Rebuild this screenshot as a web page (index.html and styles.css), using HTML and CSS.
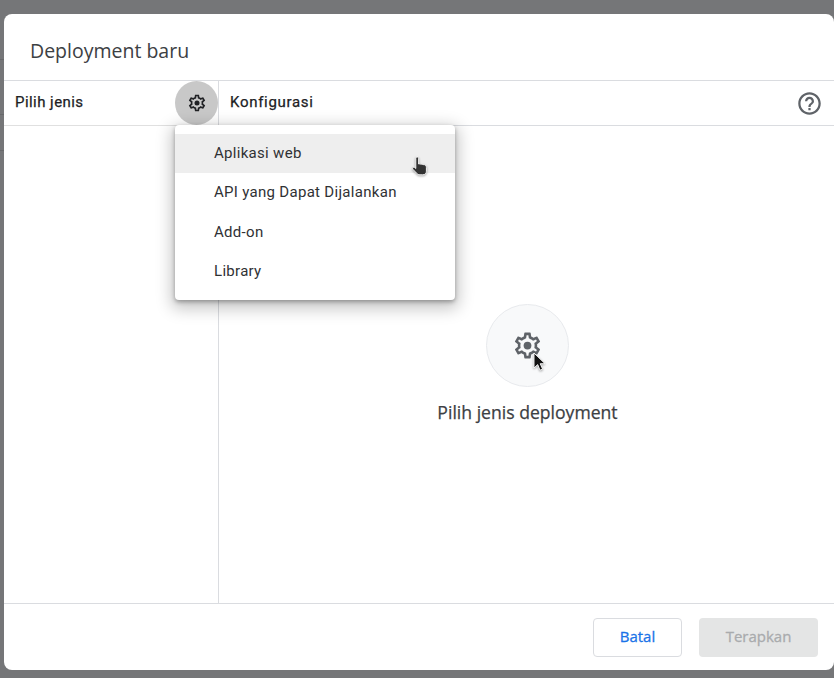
FILE: index.html
```html
<!DOCTYPE html>
<html lang="id">
<head>
<meta charset="utf-8">
<title>Deployment baru</title>
<link rel="stylesheet" href="styles.css">
</head>
<body>
<div class="backdrop">
  <div class="dialog">
    <header class="title-bar"><h1 class="title">Deployment baru</h1></header>
    <div class="columns">
      <aside class="side">
        <div class="side-head">
          <span class="head-label">Pilih jenis</span>
          <span class="gear-btn">
            <svg class="gear-sm" viewBox="0 0 24 24"><path d="M19.43 12.98c.04-.32.07-.64.07-.98 0-.34-.03-.66-.07-.98l2.11-1.65c.19-.15.24-.42.12-.64l-2-3.46c-.09-.16-.26-.25-.44-.25-.06 0-.12.01-.17.03l-2.49 1c-.52-.4-1.08-.73-1.69-.98l-.38-2.65C14.46 2.18 14.25 2 14 2h-4c-.25 0-.46.18-.49.42l-.38 2.65c-.61.25-1.17.59-1.69.98l-2.49-1c-.06-.02-.12-.03-.18-.03-.17 0-.34.09-.43.25l-2 3.46c-.13.22-.07.49.12.64l2.11 1.65c-.04.32-.07.65-.07.98 0 .33.03.66.07.98l-2.11 1.65c-.19.15-.24.42-.12.64l2 3.46c.09.16.26.25.44.25.06 0 .12-.01.17-.03l2.49-1c.52.4 1.08.73 1.69.98l.38 2.65c.03.24.24.42.49.42h4c.25 0 .46-.18.49-.42l.38-2.65c.61-.25 1.17-.59 1.69-.98l2.49 1c.06.02.12.03.18.03.17 0 .34-.09.43-.25l2-3.46c.12-.22.07-.49-.12-.64l-2.11-1.65zm-1.98-1.71c.04.31.05.52.05.73 0 .21-.02.43-.05.73l-.14 1.13.89.7 1.08.84-.7 1.21-1.27-.51-1.04-.42-.9.68c-.43.32-.84.56-1.25.73l-1.06.43-.16 1.13-.2 1.35h-1.4l-.19-1.35-.16-1.13-1.06-.43c-.43-.18-.83-.41-1.23-.71l-.91-.7-1.06.43-1.27.51-.7-1.21 1.08-.84.89-.7-.14-1.13c-.03-.31-.05-.54-.05-.74s.02-.43.05-.73l.14-1.13-.89-.7-1.08-.84.7-1.21 1.27.51 1.04.42.9-.68c.43-.32.84-.56 1.25-.73l1.06-.43.16-1.13.2-1.35h1.39l.19 1.35.16 1.13 1.06.43c.43.18.83.41 1.23.71l.91.7 1.06-.43 1.27-.51.7 1.21-1.07.85-.89.7.14 1.13z"/><circle cx="12" cy="12" r="3"/></svg>
          </span>
        </div>
      </aside>
      <main class="content">
        <div class="content-head">
          <span class="head-label">Konfigurasi</span>
          <svg class="help" viewBox="0 0 24 24"><path d="M11 18h2v-2h-2v2zm1-16C6.48 2 2 6.48 2 12s4.48 10 10 10 10-4.48 10-10S17.52 2 12 2zm0 18c-4.41 0-8-3.59-8-8s3.59-8 8-8 8 3.59 8 8-3.59 8-8 8zm0-14c-2.21 0-4 1.79-4 4h2c0-1.1.9-2 2-2s2 .9 2 2c0 2-3 1.75-3 5h2c0-2.25 3-2.5 3-5 0-2.21-1.79-4-4-4z"/></svg>
        </div>
        <div class="empty">
          <div class="empty-circle">
            <svg class="gear-lg" viewBox="0 0 24 24"><path d="M19.43 12.98c.04-.32.07-.64.07-.98 0-.34-.03-.66-.07-.98l2.11-1.65c.19-.15.24-.42.12-.64l-2-3.46c-.09-.16-.26-.25-.44-.25-.06 0-.12.01-.17.03l-2.49 1c-.52-.4-1.08-.73-1.69-.98l-.38-2.65C14.46 2.18 14.25 2 14 2h-4c-.25 0-.46.18-.49.42l-.38 2.65c-.61.25-1.17.59-1.69.98l-2.49-1c-.06-.02-.12-.03-.18-.03-.17 0-.34.09-.43.25l-2 3.46c-.13.22-.07.49.12.64l2.11 1.65c-.04.32-.07.65-.07.98 0 .33.03.66.07.98l-2.11 1.65c-.19.15-.24.42-.12.64l2 3.46c.09.16.26.25.44.25.06 0 .12-.01.17-.03l2.49-1c.52.4 1.08.73 1.69.98l.38 2.65c.03.24.24.42.49.42h4c.25 0 .46-.18.49-.42l.38-2.65c.61-.25 1.17-.59 1.69-.98l2.49 1c.06.02.12.03.18.03.17 0 .34-.09.43-.25l2-3.46c.12-.22.07-.49-.12-.64l-2.11-1.65zm-1.98-1.71c.04.31.05.52.05.73 0 .21-.02.43-.05.73l-.14 1.13.89.7 1.08.84-.7 1.21-1.27-.51-1.04-.42-.9.68c-.43.32-.84.56-1.25.73l-1.06.43-.16 1.13-.2 1.35h-1.4l-.19-1.35-.16-1.13-1.06-.43c-.43-.18-.83-.41-1.23-.71l-.91-.7-1.06.43-1.27.51-.7-1.21 1.08-.84.89-.7-.14-1.13c-.03-.31-.05-.54-.05-.74s.02-.43.05-.73l.14-1.13-.89-.7-1.08-.84.7-1.21 1.27.51 1.04.42.9-.68c.43-.32.84-.56 1.25-.73l1.06-.43.16-1.13.2-1.35h1.39l.19 1.35.16 1.13 1.06.43c.43.18.83.41 1.23.71l.91.7 1.06-.43 1.27-.51.7 1.21-1.07.85-.89.7.14 1.13z"/><circle cx="12" cy="12" r="3"/></svg>
          </div>
          <p class="empty-text">Pilih jenis deployment</p>
        </div>
      </main>
    </div>
    <footer class="footer">
      <button class="btn btn-cancel">Batal</button>
      <button class="btn btn-apply">Terapkan</button>
    </footer>
  </div>
  <ul class="menu">
    <li class="menu-item hover">Aplikasi web</li>
    <li class="menu-item">API yang Dapat Dijalankan</li>
    <li class="menu-item">Add-on</li>
    <li class="menu-item">Library</li>
  </ul>
  <svg class="cursor cursor-hand" viewBox="0 0 16 20"><path d="M3.8 2.2c0-.8.6-1.3 1.4-1.3s1.4.5 1.4 1.3V8c.9-.3 1.7-.2 2.3.2.8-.3 1.6-.1 2.2.4.9-.2 1.7.1 2.4.7.7.6.9 1.3.9 2.2v3.7c0 2.2-1.4 3.6-3.6 3.6H8c-1.4 0-2.4-.5-3.3-1.5L1 13.4c-.6-.7-.5-1.4 0-1.8.6-.5 1.3-.4 1.9.1l.9.8z" fill="#333" stroke="#fff" stroke-width=".9"/></svg>
  <svg class="cursor cursor-arrow" viewBox="0 0 14 20"><path d="M1 1v15l3.7-3.4 2.3 5.6 2.6-1.1-2.4-5.4H12z" fill="#111" stroke="#fff" stroke-width=".9"/></svg>
</div>
</body>
</html>
```

FILE: styles.css
```css
* { box-sizing: border-box; }
html, body { margin: 0; height: 100%; }
body { overflow: hidden; font-family: Roboto, "Liberation Sans", sans-serif; }
.backdrop {
  position: relative;
  width: 834px;
  height: 678px;
  padding: 14px 0 8px 4px;
  background-color: #757678;
  background-image:
    linear-gradient(#68696b, #68696b),
    linear-gradient(#68696b, #68696b),
    linear-gradient(#68696b, #68696b);
  background-size: 4px 1px;
  background-position: 0 59px, 0 114px, 0 150px;
  background-repeat: no-repeat;
}
.dialog {
  display: flex;
  flex-direction: column;
  height: 656px;
  background: #fff;
  border-radius: 8px;
}
.title-bar {
  height: 67px;
  flex: none;
  display: flex;
  align-items: center;
  padding: 7px 0 0 26px;
  border-bottom: 1px solid #dadce0;
}
.title {
  margin: 0;
  font: 400 19.5px "Open Sans", Roboto, sans-serif;
  color: #3c4043;
}
.columns { flex: 1; display: flex; min-height: 0; }
.side { width: 215px; flex: none; border-right: 1px solid #dadce0; }
.side-head {
  height: 45px;
  display: flex;
  align-items: center;
  justify-content: space-between;
  padding-left: 11px;
  border-bottom: 1px solid #e0e0e0;
}
.head-label {
  position: relative;
  top: -1px;
  font-size: 15px;
  font-weight: 400;
  letter-spacing: .55px;
  color: #202124;
  -webkit-text-stroke: .25px #202124;
}
.side-head .head-label { letter-spacing: .45px; }
.content-head .head-label { letter-spacing: .7px; }
.gear-btn {
  width: 43px;
  height: 44px;
  display: flex;
  align-items: center;
  justify-content: center;
  border-radius: 50%;
  background: #c8c8c8;
}
.gear-sm { width: 20px; height: 20px; fill: #202124; }
.content { flex: 1; display: flex; flex-direction: column; min-width: 0; }
.content-head {
  height: 45px;
  flex: none;
  display: flex;
  align-items: center;
  justify-content: space-between;
  padding: 0 11px;
  border-bottom: 1px solid #dadce0;
}
.help { width: 27px; height: 27px; fill: #5f6368; }
.empty {
  flex: 1;
  display: flex;
  flex-direction: column;
  align-items: center;
  padding: 178px 0 0 2px;
}
.empty-circle {
  width: 83px;
  height: 83px;
  display: flex;
  align-items: center;
  justify-content: center;
  border-radius: 50%;
  background: #f8f9fa;
  border: 1px solid #e8eaed;
}
.gear-lg { width: 31px; height: 31px; fill: #5f6368; }
.empty-text {
  margin: 15px 0 0;
  font: 500 17.6px "Open Sans", Roboto, sans-serif;
  line-height: 20px;
  color: #3c4043;
  -webkit-text-stroke: .25px #3c4043;
}
.footer {
  height: 67px;
  flex: none;
  display: flex;
  justify-content: flex-end;
  align-items: center;
  gap: 17px;
  padding-right: 16px;
  border-top: 1px solid #dadce0;
}
.btn {
  height: 39px;
  padding: 0 0 3px;
  border-radius: 4px;
  font: 500 15px "Open Sans", Roboto, sans-serif;
  -webkit-text-stroke: .3px currentColor;
}
.btn-cancel { width: 89px; background: #fff; border: 1px solid #dadce0; color: #1a73e8; }
.btn-apply { width: 119px; background: #e4e5e5; border: 0; color: #a9abad; }
.menu {
  position: absolute;
  left: 175px;
  top: 125px;
  width: 280px;
  height: 175px;
  margin: 0;
  padding: 9px 0;
  list-style: none;
  background: #fff;
  border-radius: 4px;
  box-shadow: 0 2px 4px rgba(0,0,0,.3), 0 5px 16px 4px rgba(0,0,0,.22);
}
.menu-item {
  height: 39.33px;
  padding: 0 0 1px 39px;
  display: flex;
  align-items: center;
  font-size: 15px;
  letter-spacing: .3px;
  color: #303134;
}
.menu-item.hover { background: #eeeeee; }
.cursor { position: absolute; }
.cursor-hand { left: 412px; top: 156px; width: 16px; height: 20px; filter: drop-shadow(0 1px 1px rgba(0,0,0,.35)); }
.cursor-arrow { left: 533px; top: 352px; width: 14px; height: 20px; filter: drop-shadow(0 1px 1px rgba(0,0,0,.35)); }
```
